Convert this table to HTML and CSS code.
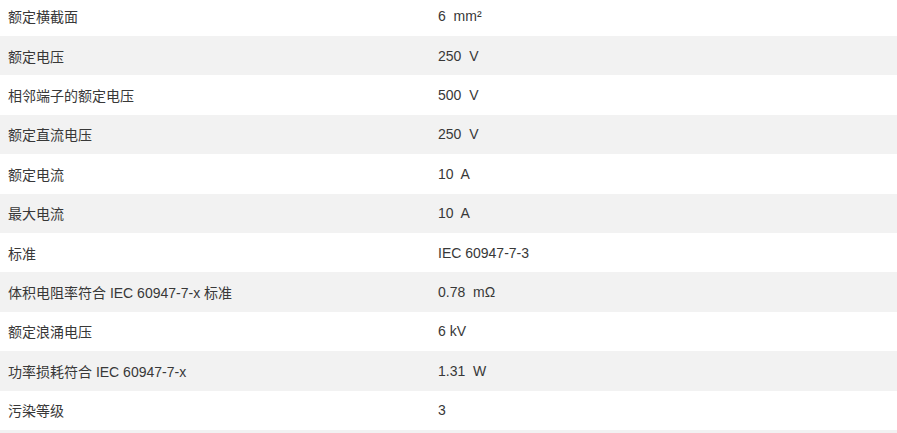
FILE: index.html
```html
<!DOCTYPE html>
<html lang="zh-CN">
<head>
<meta charset="utf-8">
<title>技术参数</title>
<link rel="stylesheet" href="styles.css">
</head>
<body>
<div class="specs">
  <div class="row"><div class="k">额定横截面</div><div class="v">6&nbsp; mm²</div></div>
  <div class="row alt"><div class="k">额定电压</div><div class="v">250&nbsp; V</div></div>
  <div class="row"><div class="k">相邻端子的额定电压</div><div class="v">500&nbsp; V</div></div>
  <div class="row alt"><div class="k">额定直流电压</div><div class="v">250&nbsp; V</div></div>
  <div class="row"><div class="k">额定电流</div><div class="v">10&nbsp; A</div></div>
  <div class="row alt"><div class="k">最大电流</div><div class="v">10&nbsp; A</div></div>
  <div class="row"><div class="k">标准</div><div class="v">IEC 60947-7-3</div></div>
  <div class="row alt"><div class="k">体积电阻率符合 IEC 60947-7-x 标准</div><div class="v">0.78&nbsp; mΩ</div></div>
  <div class="row"><div class="k">额定浪涌电压</div><div class="v">6 kV</div></div>
  <div class="row alt"><div class="k">功率损耗符合 IEC 60947-7-x</div><div class="v">1.31&nbsp; W</div></div>
  <div class="row"><div class="k">污染等级</div><div class="v">3</div></div>
  <div class="row alt edge"></div>
</div>
</body>
</html>
```
FILE: styles.css
```css
html, body {
  margin: 0;
  padding: 0;
  background: #ffffff;
  overflow: hidden;
}
body {
  font-family: "Liberation Sans", "Noto Sans CJK SC", sans-serif;
  font-size: 14px;
  color: #383838;
}
.specs {
  margin-top: -3.4px;
}
.row {
  display: grid;
  grid-template-columns: 430px 1fr;
  height: 39.4px;
  align-items: center;
  background: #ffffff;
}
.row.alt {
  background: #f2f2f2;
}
.row.edge {
  height: 3px;
}
.k, .v {
  padding-left: 8px;
  white-space: nowrap;
}
```
